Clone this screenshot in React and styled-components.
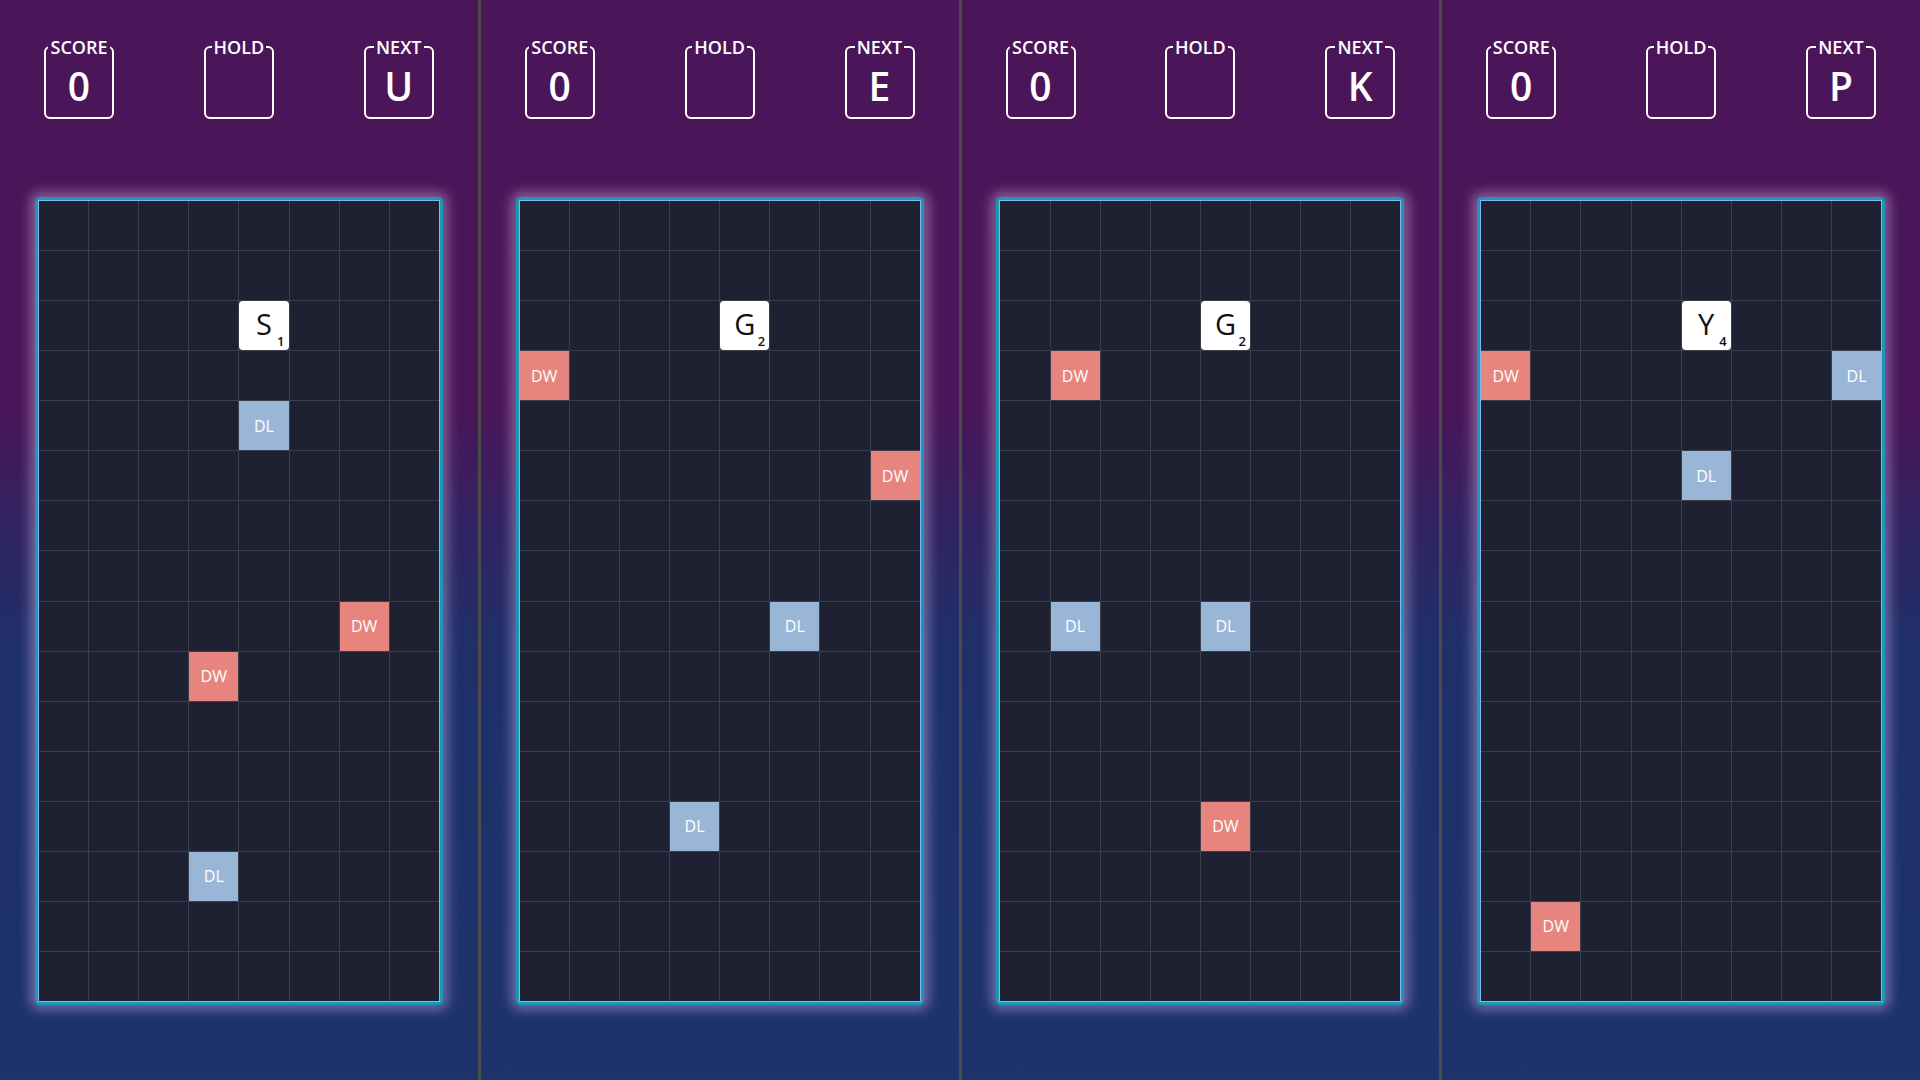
import React from "react";
import styled, { createGlobalStyle } from "styled-components";

const GlobalStyle = createGlobalStyle`
  html, body {
    margin: 0;
    padding: 0;
    background: #1e3169;
  }
  body {
    font-family: "Open Sans", "Noto Sans", sans-serif;
  }
`;

const Page = styled.div`
  display: flex;
  width: 1920px;
  height: 1080px;
  overflow: hidden;
`;

const Panel = styled.section`
  flex: 1;
  display: flex;
  flex-direction: column;
  align-items: center;
  padding-top: 36px;
  box-sizing: border-box;
  background: linear-gradient(
    to bottom,
    #4b1659 0%,
    #4a1659 38%,
    #2f2563 50%,
    #1f3069 60%,
    #1e336b 100%
  );
  & + & {
    border-left: 3px solid #4b4b4e;
  }
`;

const Header = styled.div`
  width: 100%;
  box-sizing: border-box;
  padding: 0 44px;
  display: flex;
  justify-content: space-between;
`;

const StatBox = styled.fieldset`
  margin: 0;
  padding: 0;
  width: 70px;
  box-sizing: border-box;
  border: 2px solid #ffffff;
  border-radius: 6px;
  min-width: 0;
  legend {
    margin: 0 auto;
    padding: 0 2px;
    color: #ffffff;
    font-size: 18px;
    font-weight: 600;
    line-height: 22px;
  }
`;

const StatValue = styled.div`
  height: 59px;
  display: flex;
  align-items: center;
  justify-content: center;
  color: #ffffff;
  font-size: 39px;
  font-weight: 600;
  line-height: 1;
  padding-bottom: 4px;
  box-sizing: border-box;
`;

const Board = styled.div`
  margin-top: 78px;
  border: 3px solid #1a98b5;
  border-radius: 4px;
  box-shadow: 0 0 12px 5px rgba(235, 205, 255, 0.38);
`;

const Grid = styled.div`
  width: 400px;
  height: 800px;
  border: 1px solid #8cb3ef;
  display: grid;
  grid-template-columns: repeat(8, 1fr);
  grid-template-rows: repeat(16, 1fr);
  gap: 1px;
  background: #3c3f4b;
`;

const Cell = styled.div`
  background: ${p => (p.$kind === "DW" ? "#e8847e" : p.$kind === "DL" ? "#9ab6d7" : "#1e2131")};
  color: #ffffff;
  font-size: 16px;
  display: flex;
  align-items: center;
  justify-content: center;
`;

const LetterTile = styled.div`
  position: relative;
  background: #ffffff;
  border-radius: 4px;
  display: flex;
  align-items: center;
  justify-content: center;
  color: #111111;
  font-size: 29px;
  font-weight: 500;
  padding-bottom: 5px;
  box-sizing: border-box;
  span {
    position: absolute;
    right: 4px;
    bottom: 2px;
    font-size: 13px;
    line-height: 1;
    font-weight: 600;
  }
`;

const boards = [
  {
    next: "U",
    letter: { ch: "S", pts: 1, col: 4, row: 2 },
    specials: [["DL", 4, 4], ["DW", 6, 8], ["DW", 3, 9], ["DL", 3, 13]]
  },
  {
    next: "E",
    letter: { ch: "G", pts: 2, col: 4, row: 2 },
    specials: [["DW", 0, 3], ["DW", 7, 5], ["DL", 5, 8], ["DL", 3, 12]]
  },
  {
    next: "K",
    letter: { ch: "G", pts: 2, col: 4, row: 2 },
    specials: [["DW", 1, 3], ["DL", 1, 8], ["DL", 4, 8], ["DW", 4, 12]]
  },
  {
    next: "P",
    letter: { ch: "Y", pts: 4, col: 4, row: 2 },
    specials: [["DW", 0, 3], ["DL", 7, 3], ["DL", 4, 5], ["DW", 1, 14]]
  }
];

const Stat = ({ label, value }) => (
  <StatBox>
    <legend>{label}</legend>
    <StatValue>{value}</StatValue>
  </StatBox>
);

const GameBoard = ({ letter, specials }) => {
  const cells = [];
  for (let row = 0; row < 16; row++) {
    for (let col = 0; col < 8; col++) {
      const key = `${row}-${col}`;
      if (letter.col === col && letter.row === row) {
        cells.push(
          <LetterTile key={key}>
            {letter.ch}
            <span>{letter.pts}</span>
          </LetterTile>
        );
        continue;
      }
      const sp = specials.find(s => s[1] === col && s[2] === row);
      cells.push(
        <Cell key={key} $kind={sp && sp[0]}>
          {sp ? sp[0] : null}
        </Cell>
      );
    }
  }
  return (
    <Board>
      <Grid>{cells}</Grid>
    </Board>
  );
};

export default function App() {
  return (
    <>
      <GlobalStyle />
      <Page>
        {boards.map((b, i) => (
          <Panel key={i}>
            <Header>
              <Stat label="SCORE" value="0" />
              <Stat label="HOLD" value="" />
              <Stat label="NEXT" value={b.next} />
            </Header>
            <GameBoard letter={b.letter} specials={b.specials} />
          </Panel>
        ))}
      </Page>
    </>
  );
}
